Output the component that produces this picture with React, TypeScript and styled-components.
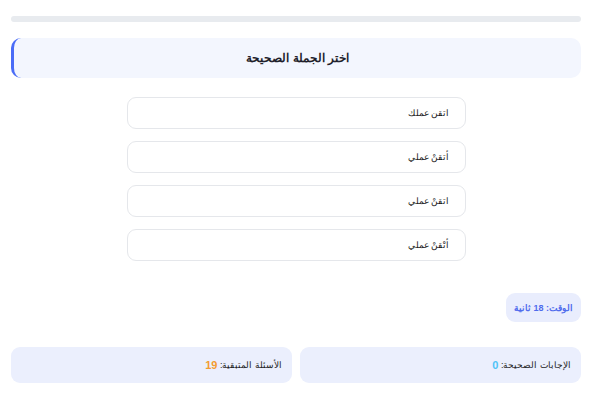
import React from "react";
import styled, { createGlobalStyle } from "styled-components";

const Global = createGlobalStyle`
  html, body { margin: 0; padding: 0; background: #ffffff; }
  body { font-family: "Liberation Sans", Arial, sans-serif; }
`;

const Page = styled.div`
  direction: rtl;
  padding: 16px 12px 20px 11px;
  display: flex;
  flex-direction: column;
`;

const Progress = styled.div`
  height: 6px;
  border-radius: 4px;
  background: #e8ebef;
  overflow: hidden;
`;

const Fill = styled.div`
  height: 100%;
  background: #4a6cf7;
`;

const Question = styled.div`
  margin-top: 16px;
  height: 40px;
  box-sizing: border-box;
  background: #f3f6fe;
  border-radius: 10px;
  border-left: 3px solid #4a6cf7;
  display: flex;
  align-items: center;
  justify-content: center;
  font-size: 11.5px;
  font-weight: bold;
  color: #1f1f2b;
`;

const Options = styled.div`
  margin: 19px auto 0;
  width: 339px;
  display: flex;
  flex-direction: column;
  gap: 12px;
`;

const Option = styled.button`
  direction: rtl;
  height: 32px;
  box-sizing: border-box;
  border: 1px solid #e5e7eb;
  border-radius: 9px;
  background: #fff;
  padding: 0 15px;
  text-align: right;
  font-family: inherit;
  font-size: 8.5px;
  color: #1a1a1a;
  cursor: pointer;
`;

const TimerRow = styled.div`
  margin-top: 32px;
  display: flex;
  justify-content: flex-start;
`;

const Timer = styled.div`
  height: 29px;
  padding: 0 8px;
  display: flex;
  align-items: center;
  border-radius: 9px;
  background: #e9edfd;
  color: #4f6bed;
  font-size: 9px;
  font-weight: bold;
`;

const Stats = styled.div`
  margin-top: 25px;
  display: grid;
  grid-template-columns: 1fr 1fr;
  gap: 8px;
`;

const Stat = styled.div`
  height: 36px;
  padding: 0 10px;
  display: flex;
  align-items: center;
  border-radius: 9px;
  background: #ebeffd;
  font-size: 9px;
  color: #222;
`;

const Num = styled.span<{ $color: string }>`
  color: ${(p) => p.$color};
  font-weight: bold;
  font-size: 11px;
`;

const options = ["اتقن عملك", "أتقنْ عملي", "اتقنْ عملي", "أتْقنْ عملي"];

export default function App() {
  return (
    <>
      <Global />
      <Page>
        <Progress>
          <Fill style={{ width: "0%" }} />
        </Progress>
        <Question>اختر الجملة الصحيحة</Question>
        <Options>
          {options.map((o) => (
            <Option key={o}>{o}</Option>
          ))}
        </Options>
        <TimerRow>
          <Timer>الوقت: 18 ثانية</Timer>
        </TimerRow>
        <Stats>
          <Stat>
            الإجابات الصحيحة:&nbsp;<Num $color="#4fc3f7">0</Num>
          </Stat>
          <Stat>
            الأسئلة المتبقية:&nbsp;<Num $color="#f39c32">19</Num>
          </Stat>
        </Stats>
      </Page>
    </>
  );
}
